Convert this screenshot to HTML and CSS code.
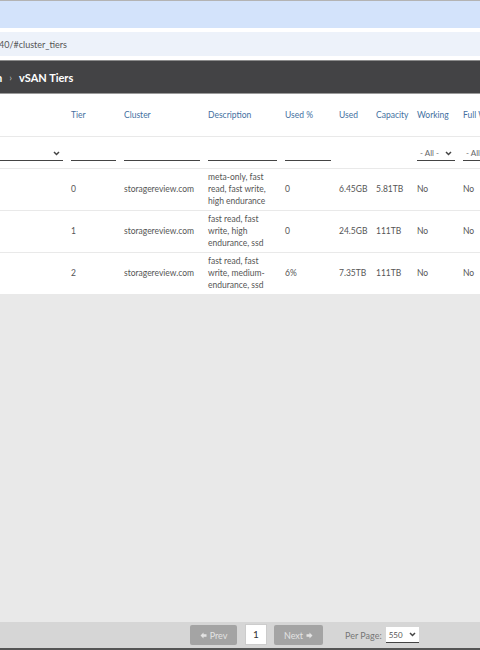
FILE: index.html
```html
<!DOCTYPE html>
<html lang="en">
  <head>
    <meta charset="UTF-8" />
    <meta name="viewport" content="width=device-width, initial-scale=1.0" />
    <title>vSAN Tiers</title>
    <link rel="stylesheet" href="styles.css">
  </head>
  <body>
    <div class="tabstrip"></div>
    <div class="urlbar">
      <span class="url">40/#cluster_tiers</span>
    </div>
    <div class="crumbs">
      <span class="crumb_prev">n</span>
      <span class="sep">&rsaquo;</span>
      <span class="crumb_cur">vSAN Tiers</span>
    </div>

    <div class="content">
      <div class="table_wrap">
        <table class="tiers">
          <colgroup>
            <col class="c0" /><col class="c1" /><col class="c2" /><col class="c3" />
            <col class="c4" /><col class="c5" /><col class="c6" /><col class="c7" /><col class="c8" />
          </colgroup>
          <thead>
            <tr class="head">
              <th></th>
              <th>Tier</th>
              <th>Cluster</th>
              <th>Description</th>
              <th>Used %</th>
              <th>Used</th>
              <th>Capacity</th>
              <th>Working</th>
              <th>Full W</th>
            </tr>
            <tr class="filters">
              <th>
                <div class="sel"><span></span>
                  <svg class="chev" width="7" height="5" viewBox="0 0 7 5"><polyline points="1,1 3.5,3.5 6,1" /></svg>
                </div>
              </th>
              <th><div class="inp"></div></th>
              <th><div class="inp"></div></th>
              <th><div class="inp"></div></th>
              <th><div class="inp"></div></th>
              <th></th>
              <th></th>
              <th>
                <div class="sel"><span>- All -</span>
                  <svg class="chev" width="7" height="5" viewBox="0 0 7 5"><polyline points="1,1 3.5,3.5 6,1" /></svg>
                </div>
              </th>
              <th>
                <div class="sel"><span>- All</span></div>
              </th>
            </tr>
          </thead>
          <tbody>
            <tr>
              <td></td>
              <td>0</td>
              <td>storagereview.com</td>
              <td>meta-only, fast read, fast write, high endurance</td>
              <td>0</td>
              <td>6.45GB</td>
              <td>5.81TB</td>
              <td>No</td>
              <td>No</td>
            </tr>
            <tr>
              <td></td>
              <td>1</td>
              <td>storagereview.com</td>
              <td>fast read, fast write, high endurance, ssd</td>
              <td>0</td>
              <td>24.5GB</td>
              <td>111TB</td>
              <td>No</td>
              <td>No</td>
            </tr>
            <tr>
              <td></td>
              <td>2</td>
              <td>storagereview.com</td>
              <td>fast read, fast write, medium-endurance, ssd</td>
              <td>6%</td>
              <td>7.35TB</td>
              <td>111TB</td>
              <td>No</td>
              <td>No</td>
            </tr>
          </tbody>
        </table>
      </div>
      <div class="filler"></div>
    </div>

    <div class="pager">
      <button class="pbtn prev">
        <svg width="7" height="7" viewBox="0 0 7 7"><path d="M0.5 3.5 L3.5 0.5 L3.5 2.2 L6.5 2.2 L6.5 4.8 L3.5 4.8 L3.5 6.5 Z" /></svg>
        Prev
      </button>
      <div class="page_no">1</div>
      <button class="pbtn next">
        Next
        <svg width="7" height="7" viewBox="0 0 7 7"><path d="M6.5 3.5 L3.5 0.5 L3.5 2.2 L0.5 2.2 L0.5 4.8 L3.5 4.8 L3.5 6.5 Z" /></svg>
      </button>
      <span class="per_label">Per Page:</span>
      <div class="per_sel">
        <span>550</span>
        <svg class="chev" width="7" height="5" viewBox="0 0 7 5"><polyline points="1,1 3.5,3.5 6,1" /></svg>
      </div>
    </div>
    <div class="taskbar"></div>
  </body>
</html>
```

FILE: styles.css
```css
* {
  margin: 0;
  padding: 0;
  box-sizing: border-box;
}
html,
body {
  height: 650px;
  overflow: hidden;
}
body {
  font-family: Lato, "Open Sans", sans-serif;
  background-color: #fff;
  display: flex;
  flex-direction: column;
  width: 480px;
}

.tabstrip {
  height: 28px;
  border-top: 1px solid #b3b3b3;
  background-color: #d3e3fb;
  flex-shrink: 0;
}
.urlbar {
  height: 24px;
  margin-top: 4px;
  background-color: #edf2fa;
  display: flex;
  align-items: center;
  flex-shrink: 0;
}
.url {
  font-size: 9px;
  color: #555;
  margin-left: -1px;
}

.crumbs {
  height: 34px;
  margin-top: 4px;
  border-top: 1px solid #8c8c8c;
  border-bottom: 1px solid #9a9a9a;
  background-color: #434345;
  color: #fff;
  display: flex;
  align-items: center;
  flex-shrink: 0;
  font-size: 11px;
}
.crumb_prev {
  margin-left: -4px;
  font-weight: bold;
}
.sep {
  color: #bbb;
  margin: 0 7px 0 7px;
  font-size: 10px;
}
.crumb_cur {
  font-weight: bold;
}

.content {
  flex: 1;
  display: flex;
  flex-direction: column;
}
.table_wrap {
  overflow: hidden;
  width: 480px;
}
.tiers {
  border-collapse: collapse;
  table-layout: fixed;
  width: 519px;
  font-size: 8.5px;
  color: #555;
}
.c0 { width: 67px; }
.c1 { width: 53px; }
.c2 { width: 84px; }
.c3 { width: 77px; }
.c4 { width: 54px; }
.c5 { width: 37px; }
.c6 { width: 41px; }
.c7 { width: 46px; }
.c8 { width: 60px; }

th,
td {
  text-align: left;
  padding: 0 4px;
  white-space: nowrap;
  overflow: hidden;
}
th:first-child,
td:first-child {
  padding-left: 0;
}
.head th {
  height: 42px;
  font-weight: normal;
  color: #44709f;
  border-bottom: 1px solid #e9e9e9;
}
.filters th {
  height: 32px;
  vertical-align: bottom;
  padding-bottom: 7px;
  border-bottom: 1px solid #e9e9e9;
}
.inp {
  height: 12px;
  border-bottom: 1.5px solid #444;
}
.sel {
  height: 13px;
  border-bottom: 1.5px solid #444;
  display: flex;
  justify-content: space-between;
  align-items: center;
  font-weight: normal;
  color: #666;
  font-size: 8px;
  padding: 0 3px 1px 3px;
}
.chev {
  fill: none;
  stroke: #444;
  stroke-width: 1.5;
}

tbody td {
  height: 42px;
  border-bottom: 1px solid #e9e9e9;
  line-height: 12px;
}
tbody td:nth-child(4) {
  white-space: normal;
}

.filler {
  flex: 1;
  background-color: #e9e9e9;
}

.pager {
  height: 26px;
  background-color: #d6d6d6;
  display: flex;
  align-items: center;
  padding-left: 190px;
  flex-shrink: 0;
  font-size: 9px;
}
.pbtn {
  height: 20px;
  border: none;
  border-radius: 2px;
  background-color: #a4a4a4;
  color: #e3e3e3;
  font-family: Lato, sans-serif;
  font-size: 9px;
  display: flex;
  align-items: center;
  justify-content: center;
  gap: 3px;
}
.pbtn svg {
  fill: #e3e3e3;
}
.prev {
  width: 47px;
}
.next {
  width: 49px;
}
.page_no {
  width: 22px;
  height: 21px;
  margin: -2px 7px 0 8px;
  background-color: #fff;
  border: 1px solid #ccc;
  display: flex;
  align-items: center;
  justify-content: center;
  color: #333;
  font-size: 10px;
}
.per_label {
  margin-left: 22px;
  color: #777;
}
.per_sel {
  margin-left: 4px;
  width: 33px;
  height: 16px;
  background-color: #fff;
  border-bottom: 1px solid #444;
  display: flex;
  align-items: center;
  justify-content: space-between;
  padding: 0 3px;
  font-size: 8px;
  color: #555;
}
.taskbar {
  height: 2px;
  background-color: #555;
  flex-shrink: 0;
}
```
